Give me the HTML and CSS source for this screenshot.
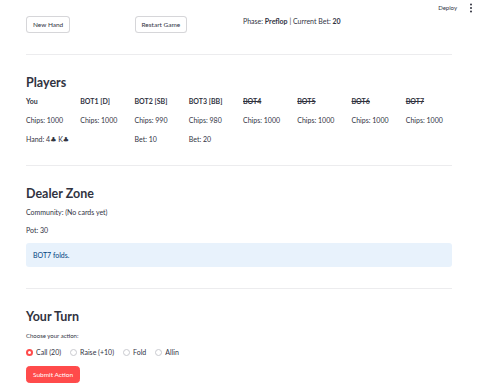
FILE: index.html
```html
<!DOCTYPE html>
<html>
<head>
<meta charset="utf-8">
<link rel="stylesheet" href="styles.css">
</head>
<body>
<header class="topbar">
  <span class="deploy">Deploy</span>
  <svg class="kebab" width="4" height="10" viewBox="0 0 4 10"><circle cx="2" cy="1.5" r="1" fill="#31333f"/><circle cx="2" cy="5" r="1" fill="#31333f"/><circle cx="2" cy="8.5" r="1" fill="#31333f"/></svg>
</header>
<main class="main">
  <div class="controls">
    <div class="col"><button class="btn">New Hand</button></div>
    <div class="col"><button class="btn">Restart Game</button></div>
    <div class="col"><p class="line">Phase: <b>Preflop</b> | Current Bet: <b>20</b></p></div>
    <div class="col"></div>
  </div>
  <hr class="divider">
  <h3 class="heading">Players</h3>
  <div class="players">
    <div class="player"><p class="line name">You</p><p class="line">Chips: 1000</p><p class="line">Hand: 4♣ K♣</p></div>
    <div class="player"><p class="line name">BOT1 [D]</p><p class="line">Chips: 1000</p></div>
    <div class="player"><p class="line name">BOT2 [SB]</p><p class="line">Chips: 990</p><p class="line">Bet: 10</p></div>
    <div class="player"><p class="line name">BOT3 [BB]</p><p class="line">Chips: 980</p><p class="line">Bet: 20</p></div>
    <div class="player"><p class="line name folded">BOT4</p><p class="line">Chips: 1000</p></div>
    <div class="player"><p class="line name folded">BOT5</p><p class="line">Chips: 1000</p></div>
    <div class="player"><p class="line name folded">BOT6</p><p class="line">Chips: 1000</p></div>
    <div class="player"><p class="line name folded">BOT7</p><p class="line">Chips: 1000</p></div>
  </div>
  <hr class="divider">
  <h3 class="heading">Dealer Zone</h3>
  <div class="stack">
    <p class="line">Community: (No cards yet)</p>
    <p class="line">Pot: 30</p>
    <div class="info">BOT7 folds.</div>
  </div>
  <hr class="divider">
  <h3 class="heading">Your Turn</h3>
  <p class="label">Choose your action:</p>
  <div class="radios">
    <label class="radio"><span class="dot checked"></span>Call (20)</label>
    <label class="radio"><span class="dot"></span>Raise (+10)</label>
    <label class="radio"><span class="dot"></span>Fold</label>
    <label class="radio"><span class="dot"></span>Allin</label>
  </div>
  <button class="btn primary">Submit Action</button>
</main>
</body>
</html>
```

FILE: styles.css
```css
* { box-sizing: border-box; }
html, body { margin: 0; padding: 0; background: #ffffff; }
body {
  font-family: "Source Sans Pro", Lato, "DejaVu Sans", sans-serif;
  color: #31333f;
  font-size: 7px;
}
p { margin: 0; }
.topbar {
  height: 16px;
  display: flex;
  justify-content: flex-end;
  align-items: center;
  gap: 12px;
  padding-right: 7px;
}
.deploy { font-size: 6px; line-height: 8px; }
.kebab { display: block; }
.main { padding: 0 28px 0 26px; }
.controls {
  display: grid;
  grid-template-columns: repeat(4, 1fr);
  gap: 8px;
  align-items: start;
}
.btn {
  font-family: inherit;
  font-size: 6.5px;
  color: #31333f;
  height: 17px;
  padding: 0 6px;
  background: #fff;
  border: 1px solid rgba(49, 51, 63, 0.2);
  border-radius: 3.5px;
  line-height: 15px;
}
.line { line-height: 10px; }
.divider {
  border: 0;
  height: 1px;
  background: #ececee;
  margin: 21px 0 0;
}
.heading {
  font-size: 12.5px;
  font-weight: 700;
  line-height: 16px;
  margin: 20px 0 0;
}
.players {
  display: grid;
  grid-template-columns: repeat(8, 1fr);
  gap: 8px;
  margin-top: 5px;
  align-items: start;
}
.player { display: flex; flex-direction: column; gap: 9px; }
.name { font-weight: 700; }
.folded { text-decoration: line-through; }
.stack { display: flex; flex-direction: column; gap: 8px; margin-top: 5px; }
.info {
  background: #e8f2fc;
  color: #004280;
  height: 24px;
  line-height: 24px;
  padding-left: 7px;
  border-radius: 3px;
}
.label { font-size: 6px; line-height: 8px; margin-top: 7px; }
.radios { display: flex; gap: 9px; margin-top: 7px; line-height: 10px; }
.radio { display: flex; align-items: center; gap: 3px; }
.dot {
  width: 7px; height: 7px;
  border-radius: 50%;
  border: 1px solid #c9cacf;
  background: #fff;
}
.dot.checked {
  border: 2px solid #ff4b4b;
  background: #fff;
}
.primary {
  margin-top: 9px;
  background: #ff4b4b;
  border-color: #ff4b4b;
  color: #fff;
}
```
